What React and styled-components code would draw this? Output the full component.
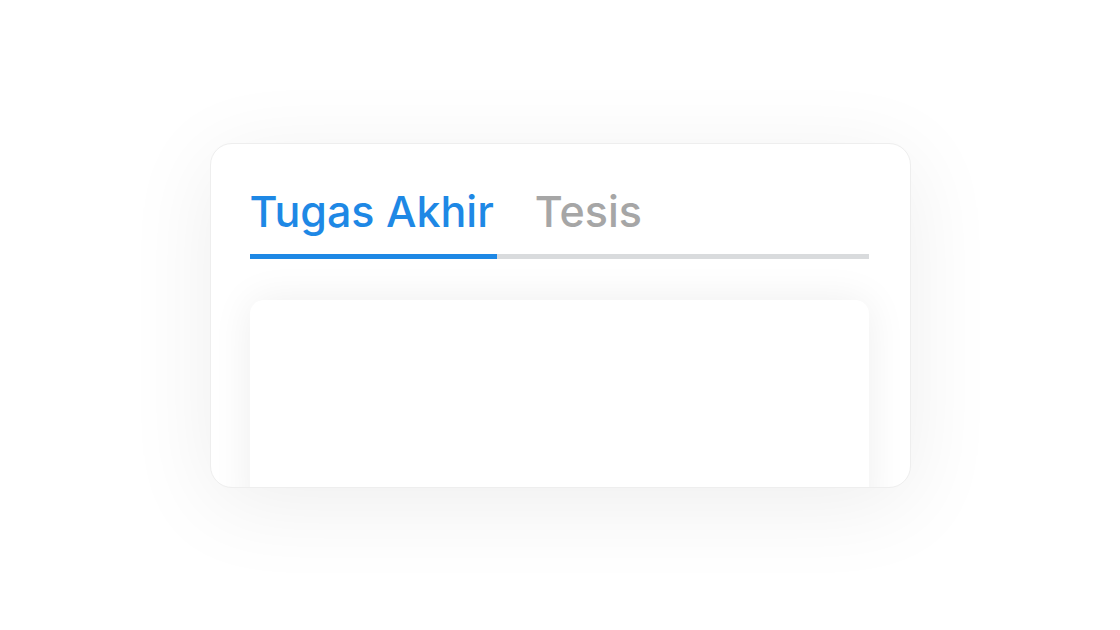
import React, { useState } from 'react';
import styled, { createGlobalStyle } from 'styled-components';

const GlobalStyle = createGlobalStyle`
  body {
    margin: 0;
    background: #ffffff;
    font-family: Inter, "Noto Sans", sans-serif;
  }
`;

const s = {
  Page: styled.div`
    min-height: 100vh;
    display: flex;
    align-items: center;
    justify-content: center;
  `,
  Card: styled.div`
    width: 701px;
    height: 345px;
    box-sizing: border-box;
    padding: 40px 41px 0 39px;
    background: #ffffff;
    border: 1px solid #eeeeee;
    border-radius: 22px;
    overflow: hidden;
    box-shadow: 0 16px 90px rgba(0, 0, 0, 0.07);
  `,
  TabList: styled.div`
    display: flex;
    gap: 38px;
    border-bottom: 5px solid #d9dbdd;
  `,
  Tab: styled.button`
    border: none;
    background: none;
    margin: 0 0 -5px 0;
    padding: 0 3px 15px 0;
    font-family: Inter, "Noto Sans", sans-serif;
    font-size: 43px;
    font-weight: 500;
    letter-spacing: 0;
    line-height: 55px;
    cursor: pointer;
    color: ${(p) => (p.$active ? '#1e88e5' : '#a6a6a6')};
    border-bottom: 5px solid ${(p) => (p.$active ? '#1e88e5' : 'transparent')};
  `,
  Panel: styled.div`
    margin-top: 41px;
    height: 220px;
    background: #ffffff;
    border-radius: 14px;
    box-shadow: 0 0 40px rgba(0, 0, 0, 0.07);
  `,
};

const tabs = ['Tugas Akhir', 'Tesis'];

export default function App() {
  const [active, setActive] = useState(0);
  return (
    <s.Page>
      <GlobalStyle />
      <s.Card>
        <s.TabList>
          {tabs.map((t, i) => (
            <s.Tab key={t} $active={i === active} onClick={() => setActive(i)}>
              {t}
            </s.Tab>
          ))}
        </s.TabList>
        <s.Panel />
      </s.Card>
    </s.Page>
  );
}
